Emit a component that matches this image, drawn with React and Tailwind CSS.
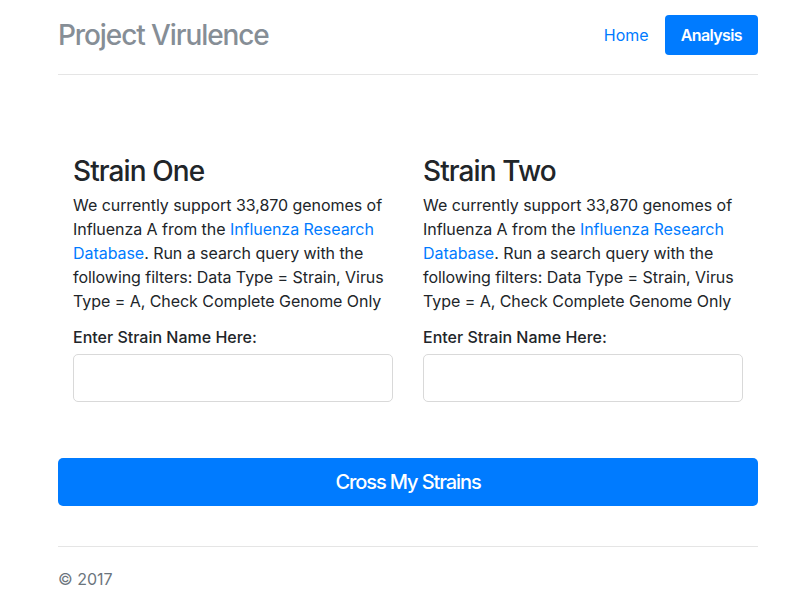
const font = { fontFamily: 'Inter, "Liberation Sans", Arial, sans-serif' };

function StrainColumn({ title }) {
  return (
    <div className="px-[15px]">
      <h3 className="mb-[4px] text-[28px] font-medium leading-[1.2] tracking-[-0.9px] text-[#212529]">{title}</h3>
      <p className="mb-[12px] text-[16px] leading-[24px] tracking-[-0.05px] text-[#212529]">
        We currently support 33,870 genomes of Influenza A from the{' '}
        <a href="#" className="text-[#007bff]">Influenza Research Database</a>. Run a search query with the
        following filters: Data Type = Strain, Virus Type = A, Check Complete Genome Only
      </p>
      <label className="mb-[5px] block text-[16px] font-medium leading-[24px] text-[#212529]">
        Enter Strain Name Here:
      </label>
      <input
        type="text"
        className="block h-[48px] w-full rounded-[5px] border border-[#d9d9d9] bg-white px-4 text-[20px] outline-none"
      />
    </div>
  );
}

export default function App() {
  return (
    <div className="min-h-[601px] bg-white" style={font}>
      <div className="ml-[58px] w-[700px]">
        <header className="flex items-center justify-between border-b border-[#e5e5e5] pb-[19px] pt-[15px]">
          <h3 className="text-[28px] font-medium leading-[40px] tracking-[-1.1px] text-[#868e96]">Project Virulence</h3>
          <nav className="flex items-center">
            <a href="#" className="block px-4 py-2 text-[16px] leading-[24px] text-[#007bff]">Home</a>
            <a
              href="#"
              className="block rounded-[4px] bg-[#007bff] px-[16px] py-2 text-[16px] font-semibold leading-[24px] tracking-[-0.6px] text-white"
            >
              Analysis
            </a>
          </nav>
        </header>

        <main className="pt-[80px]">
          <div className="grid grid-cols-2">
            <StrainColumn title="Strain One" />
            <StrainColumn title="Strain Two" />
          </div>
          <button className="mt-[56px] h-[48px] w-full rounded-[5px] bg-[#007bff] text-[20px] font-medium tracking-[-1.1px] text-white">
            Cross My Strains
          </button>
        </main>

        <footer className="mt-[40px] border-t border-[#e5e5e5] pt-[20px]">
          <p className="text-[16px] leading-[24px] text-[#6c757d]">© 2017</p>
        </footer>
      </div>
    </div>
  );
}
